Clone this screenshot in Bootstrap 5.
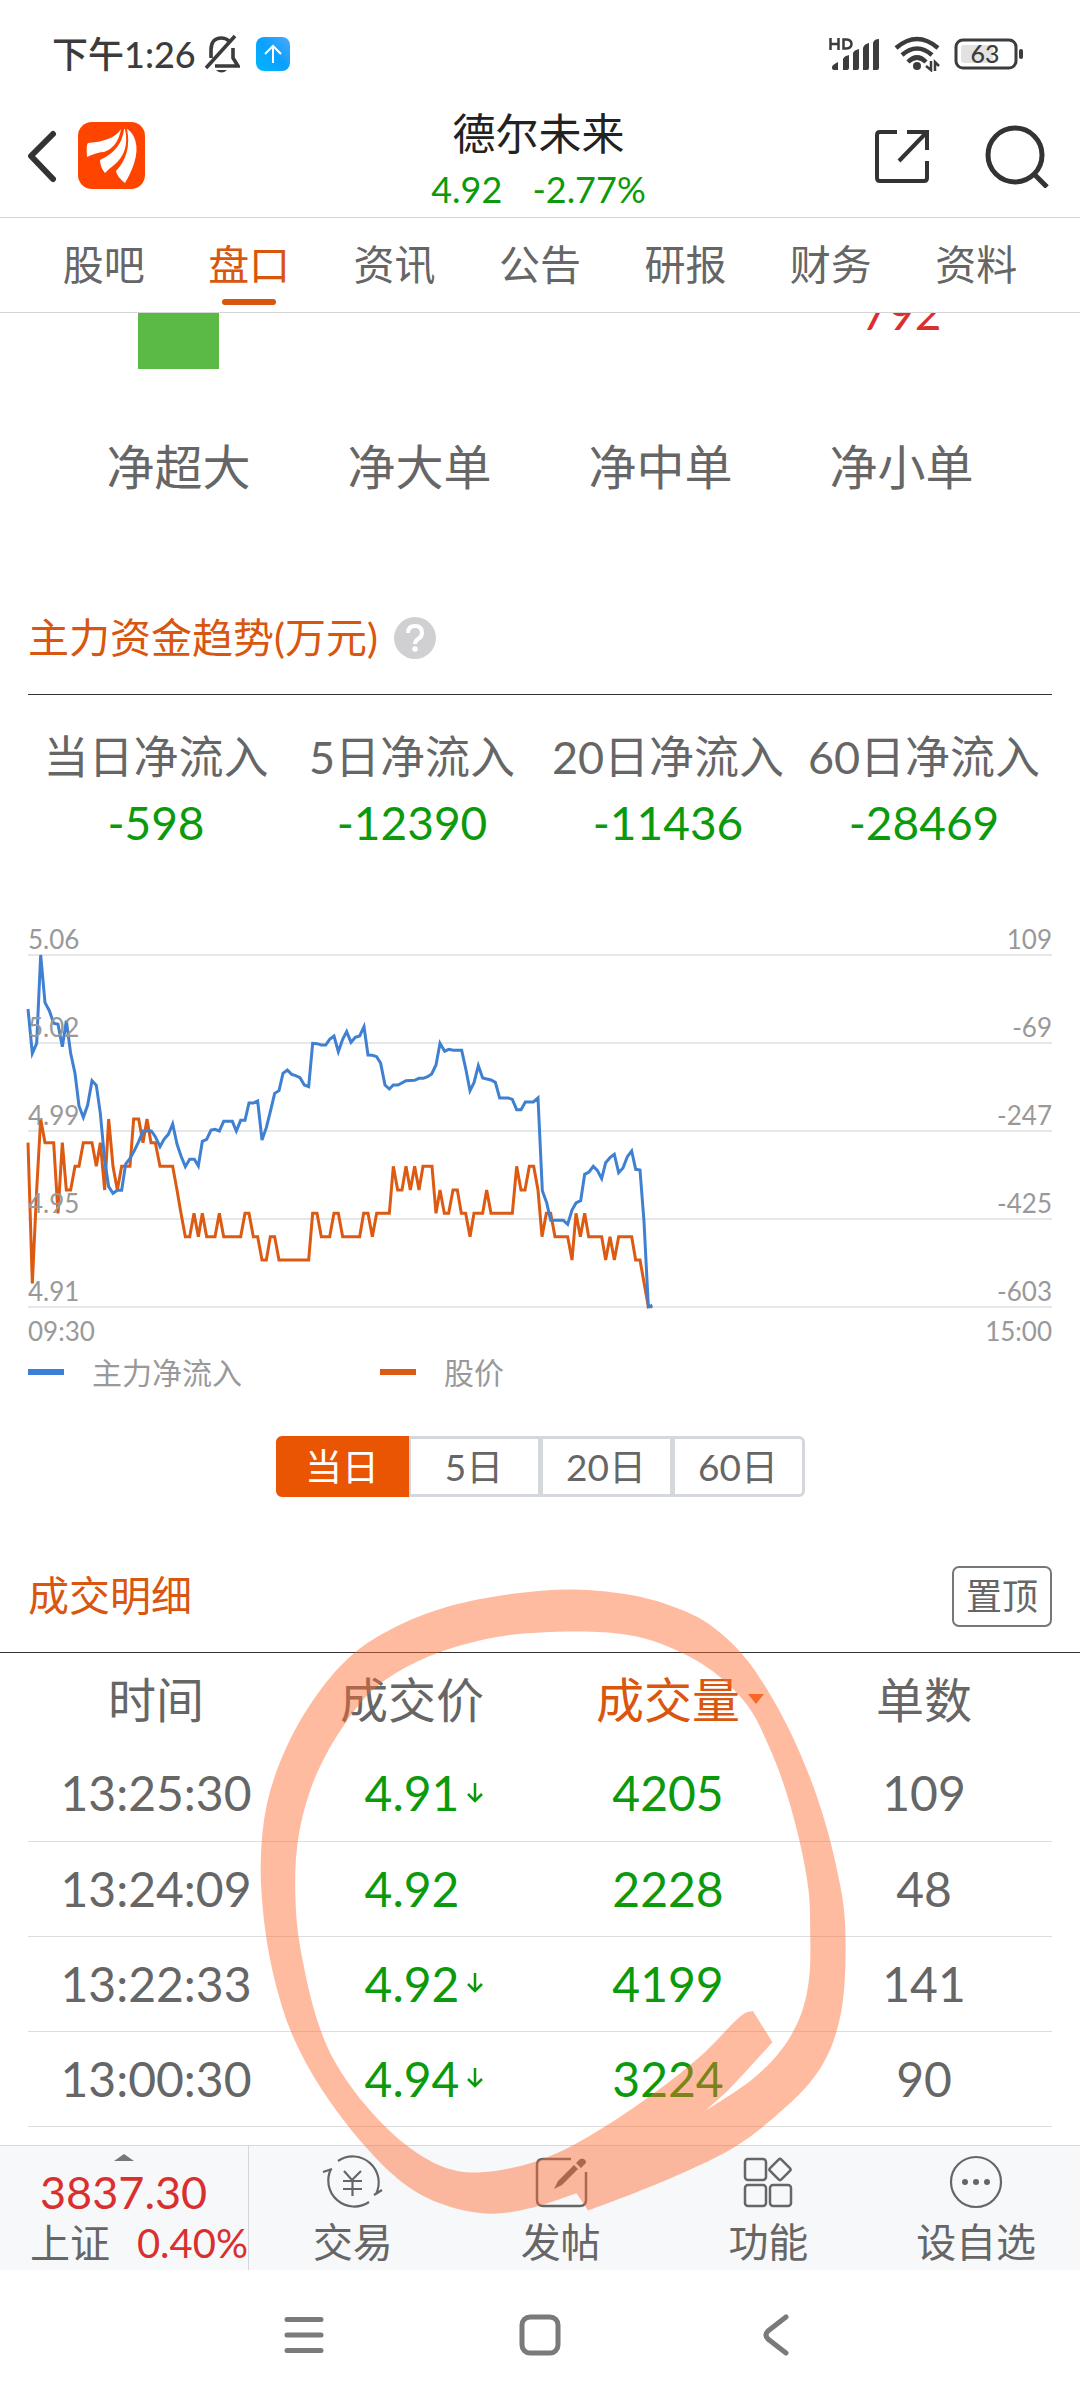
<!DOCTYPE html>
<html lang="zh-CN">
<head>
<meta charset="utf-8">
<meta name="viewport" content="width=device-width, initial-scale=1">
<title>德尔未来 盘口</title>
<link href="https://cdn.jsdelivr.net/npm/bootstrap@5.3.0/dist/css/bootstrap.min.css" rel="stylesheet">
<style>
:root{--ink:#666;--up:#d9302f;--down:#0b9a0b;--accent:#d9560f;--grid:#e6e7e9}
body{font-family:Lato,"Noto Sans CJK SC",sans-serif;color:var(--ink);background:#fff;font-size:40px;line-height:60px}
svg{display:block;flex:none}
a{color:inherit;text-decoration:none}
.app-shell{overflow:hidden}
.t-up{color:var(--up)}
.t-down{color:var(--down)}
.t-accent{color:var(--accent)}
.edge{padding-left:28px;padding-right:28px}
.status{height:100px;padding:8px 56px 0 52px;color:#3c3c3c;font-size:36px;font-weight:500}
.status .left-set{gap:8px}
.status .left-set svg+svg{margin-left:8px}
.status .right-set{gap:14px}
.app-head{height:118px;padding:0 31px 0 28px;border-bottom:1px solid #d5d5d5;display:grid;grid-template-columns:1fr auto 1fr;align-items:center}
.app-head .tools{padding-bottom:6px}
.app-head h1{font-size:43px;line-height:60px;font-weight:400;color:#222;margin:0}
.app-head .quote{font-size:36px;line-height:50px;gap:30px}
.plain{border:0;background:none;padding:0;color:inherit}
.tabs{height:95px;padding:0 31px;border-bottom:1px solid #d5d5d5}
.tabs a{position:relative;font-size:41px;line-height:94px}
.tabs a.active::after{content:"";position:absolute;left:50%;bottom:7px;width:54px;height:6px;margin-left:-27px;border-radius:3px;background:var(--accent)}
.flow-bars{padding:0 58px;height:56px;color:var(--up)}
.flow-bars .bar{width:81px;height:56px;background:#5bb946}
.flow-bars .num{height:17px;overflow:hidden;font-size:46px;line-height:34px}
.flow-names{padding:0 58px;margin-top:68px;font-size:48px}
.sect{height:113px}
.sect h2{font-size:41px;line-height:60px;font-weight:400;margin:0}
.fund{margin-top:85px;border-bottom:1px solid #333}
.stats{padding-top:29px;font-size:45px;line-height:66px}
.stats dt{font-weight:400;white-space:nowrap}
.stats dd{margin:0;font-size:46px;line-height:66px}
.chart{margin-top:60px;font-size:26px;line-height:30px;color:#999;position:relative}
.chart .lvl{height:88px;border-bottom:2px solid var(--grid)}
.chart .lvl:first-of-type{height:40px}
.chart .lvl span{position:relative;z-index:1}
.chart svg{position:absolute;left:0;top:39px;width:100%;height:352px;overflow:visible}
.times{font-size:26px;line-height:46px;color:#999}
.legend-row{height:36px;font-size:30px;color:#999;line-height:36px}
.legend-row .item{width:352px;gap:28px}
.swatch{width:36px;height:6px}
.range{margin-top:46px}
.range .btn{width:133px;height:61px;padding:0;border:3px solid #d4d8dc;border-radius:6px;font-size:37px;line-height:55px;color:var(--ink)}
.range .btn-check:checked+.btn{background:#ea5504;border-color:#ea5504;color:#fff}
.deals{margin-top:43px;border-bottom:1px solid #333}
.pin{width:100px;height:61px;border:2px solid #777;border-radius:7px;font-size:36px;line-height:57px}
.deal-table{table-layout:fixed;width:100%;text-align:center;font-size:48px;line-height:60px}
.deal-table th{height:93px;font-weight:400;padding:0}
.deal-table td{height:95px;padding:0;border-bottom:1px solid #ddd}
.tip{position:relative}
.tip svg{position:absolute;left:100%;top:50%;margin-left:8px;transform:translateY(-50%)}
.dock{margin-top:18px;height:125px;background:#f7f8fa;border-top:1px solid #d4d8dc}
.dock .index{flex:0 0 249px;border-right:1px solid #d4d8dc;padding:8px 0 0 30px}
.dock .index svg{margin:0 0 0 84px}
.dock .big{font-size:45px;line-height:62px;padding-left:10px}
.dock .small-line{line-height:40px;white-space:nowrap}
.dock .entry{flex:1 1 0;padding-top:8px;line-height:40px;gap:12px}
.sysnav{height:130px}
.sysnav .keys{width:514px}
.marker{position:absolute;left:200px;top:1560px;pointer-events:none}
</style>
<script src="https://cdn.jsdelivr.net/npm/bootstrap@5.3.0/dist/js/bootstrap.bundle.min.js"></script>
</head>
<body>
<div class="app-shell position-relative">

<div class="status d-flex align-items-center justify-content-between">
  <div class="left-set d-flex align-items-center">
    <span>下午1:26</span>
    <svg width="36" height="40" viewBox="0 0 36 40" fill="none" stroke="#3c3c3c" stroke-width="3.600"><path d="M7 24V16C7 8 11 4 17 4c3 0 6 1 8 3M29 14v10l5 8H11M2 34L31 2"/><path d="M12 36h11q-5.500 5-11 0z" fill="#3c3c3c" stroke="none"/></svg>
    <svg width="34" height="34" viewBox="0 0 34 34"><defs><linearGradient id="sky" x1="0" y1="1" x2="1" y2="0"><stop offset="0" stop-color="#00b8ff"/><stop offset=".5" stop-color="#0aa0ff"/><stop offset="1" stop-color="#4aa8ff"/></linearGradient></defs><rect width="34" height="34" rx="8" fill="url(#sky)"/><path d="M17 26V9M9 17l8-8 8 8" fill="none" stroke="#fff" stroke-width="2"/></svg>
  </div>
  <div class="right-set d-flex align-items-center">
    <svg width="51" height="34" viewBox="0 0 51 34" fill="#3c3c3c"><path d="M1.500 1v12M9.500 1v12M1.500 7h8M14.500 2.500v9h3q5-.5 5-4.500t-5-4.500z" fill="none" stroke="#3c3c3c" stroke-width="2.500"/><path d="M3 30q0-2 6-5v8H5q-2 0-2-2zM14 22q1-3 6-4v13q0 2-2 2h-4zM24 16q1-3 6-4v19q0 2-2 2h-4zM34 11q1-4 6-5v25q0 2-2 2h-4zM44 6q1-4 6-4v29q0 2-2 2h-4z"/></svg>
    <svg width="46" height="36" viewBox="0 0 46 36" fill="none" stroke="#3c3c3c" stroke-width="4.500"><path d="M2 12q21-18 42 0M8 19q15-13 30 0M14 26q9-9 18 0"/><circle cx="23" cy="30" r="4" fill="#3c3c3c" stroke="none"/><path d="M37 25v9l-5-4M41 35v-9l4 4" stroke-width="2.500"/></svg>
    <svg width="70" height="32" viewBox="0 0 70 32"><rect x="2" y="2" width="60" height="28" rx="7" fill="none" stroke="#3c3c3c" stroke-width="3"/><path d="M7 10q0-3 3-3h29v18H10q-3 0-3-3z" fill="#e2e2e2"/><rect x="65" y="11" width="4" height="10" rx="2" fill="#3c3c3c"/><text x="31" y="25" font-size="25" text-anchor="middle" fill="#3c3c3c" font-family="Lato">63</text></svg>
  </div>
</div>

<header class="app-head">
  <div class="tools d-flex align-items-center">
    <button class="plain" aria-label="返回"><svg width="50" height="54" viewBox="0 0 50 54" fill="none" stroke="#333" stroke-width="6" stroke-linecap="round" stroke-linejoin="round"><path d="M25 5L3 27l22 23"/></svg></button>
    <svg width="67" height="67" viewBox="0 0 67 67"><rect width="67" height="67" rx="14" fill="#ff4400"/><g fill="#fff"><path d="M43 7Q36 19 10 21Q8 22 9 35Q20 30 26 30Q40 25 43 7z"/><path d="M46 7Q44 28 22 38Q22 45 27 51Q32 46 36 43Q52 30 47 7z"/><path d="M49 7Q54 32 38 49Q39 55 47 61Q64 32 56 15Q53 9 49 7z"/></g></svg>
  </div>
  <div class="text-center">
    <h1>德尔未来</h1>
    <div class="quote d-flex justify-content-center t-down"><span>4.92</span><span>-2.77%</span></div>
  </div>
  <div class="tools d-flex align-items-center justify-content-end" style="gap:56px">
    <button class="plain" aria-label="分享"><svg width="54" height="54" viewBox="0 0 54 54" fill="none" stroke="#333" stroke-width="4"><path d="M22 3H5q-3 0-3 3v43q0 3 3 3h44q3 0 3-3V32M32 3h20v18M51 4L24 32"/></svg></button>
    <button class="plain" aria-label="搜索"><svg width="64" height="64" viewBox="0 0 64 64" fill="none" stroke="#333" stroke-width="5"><circle cx="30" cy="31" r="27"/><path d="M49 50l13 13"/></svg></button>
  </div>
</header>

<nav class="tabs d-flex">
  <a href="#" class="flex-fill text-center">股吧</a>
  <a href="#" class="flex-fill text-center active t-accent">盘口</a>
  <a href="#" class="flex-fill text-center">资讯</a>
  <a href="#" class="flex-fill text-center">公告</a>
  <a href="#" class="flex-fill text-center">研报</a>
  <a href="#" class="flex-fill text-center">财务</a>
  <a href="#" class="flex-fill text-center">资料</a>
</nav>

<section>
  <div class="flow-bars d-flex">
    <div class="w-25 d-flex justify-content-center"><div class="bar"></div></div>
    <div class="w-25"></div>
    <div class="w-25"></div>
    <div class="w-25"><div class="num d-flex justify-content-center align-items-end">792</div></div>
  </div>
  <div class="flow-names d-flex text-center">
    <div class="w-25">净超大</div><div class="w-25">净大单</div><div class="w-25">净中单</div><div class="w-25">净小单</div>
  </div>
</section>

<section class="edge">
  <div class="sect fund d-flex align-items-center">
    <h2 class="t-accent">主力资金趋势(万元)</h2>
    <button class="plain ms-3" aria-label="说明"><svg width="42" height="42" viewBox="0 0 42 42"><circle cx="21" cy="21" r="21" fill="#d0d0d2"/><path d="M14 16q0-7 7-7t7 7q0 4-4 6-3 2-3 5" fill="none" stroke="#fff" stroke-width="4"/><circle cx="21" cy="32" r="2.800" fill="#fff"/></svg></button>
  </div>
  <div class="stats d-flex text-center">
    <dl class="w-25 mb-0"><dt>当日净流入</dt><dd class="t-down">-598</dd></dl>
    <dl class="w-25 mb-0"><dt>5日净流入</dt><dd class="t-down">-12390</dd></dl>
    <dl class="w-25 mb-0"><dt>20日净流入</dt><dd class="t-down">-11436</dd></dl>
    <dl class="w-25 mb-0"><dt>60日净流入</dt><dd class="t-down">-28469</dd></dl>
  </div>

  <div class="chart">
    <div class="lvl d-flex justify-content-between align-items-end"><span>5.06</span><span>109</span></div>
    <div class="lvl d-flex justify-content-between align-items-end"><span>5.02</span><span>-69</span></div>
    <div class="lvl d-flex justify-content-between align-items-end"><span>4.99</span><span>-247</span></div>
    <div class="lvl d-flex justify-content-between align-items-end"><span>4.95</span><span>-425</span></div>
    <div class="lvl d-flex justify-content-between align-items-end"><span>4.91</span><span>-603</span></div>
    <svg viewBox="84 165 3072 1056" preserveAspectRatio="none" fill="none" stroke-width="9">
      <polyline stroke="#dc5a12" points="84,728 97,1150 110,870 122,657 135,728 161,728 174,940 187,728 199,870 212,870 225,799 237,799 250,728 276,728 289,799 301,728 314,870 326,657 339,799 352,870 365,799 390,799 401,657 416,657 429,728 441,657 453,728 466,728 480,799 518,799 531,870 543,940 556,1010 569,1010 582,940 595,1010 607,940 620,1010 645,1010 658,940 671,1010 722,1010 735,940 747,940 760,1010 773,1010 786,1080 799,1080 811,1010 824,1010 837,1080 926,1080 938,940 951,940 964,1010 989,1010 1002,940 1015,940 1028,1010 1079,1010 1091,940 1104,940 1117,1010 1130,940 1168,940 1180,799 1193,870 1206,870 1218,799 1231,870 1244,799 1257,870 1269,799 1296,799 1308,940 1320,870 1333,940 1346,940 1359,870 1372,870 1384,940 1397,940 1410,1010 1422,940 1448,940 1460,870 1473,940 1537,940 1550,799 1563,870 1575,870 1588,799 1601,799 1614,870 1626,1010 1639,940 1652,940 1665,1010 1703,1010 1716,1080 1728,940 1741,1010 1754,940 1766,1010 1805,1010 1817,1080 1830,1010 1843,1080 1856,1010 1895,1010 1907,1080 1920,1080 1945,1220 1957,1220"/>
      <polyline stroke="#3f80d2" points="84,327 97,460 110,430 122,165 135,308 148,332 161,370 174,373 187,440 199,362 212,460 225,520 237,618 250,652 263,615 276,542 289,556 301,640 314,780 326,860 339,880 352,871 365,871 377,792 390,775 403,752 416,725 429,693 454,693 466,710 480,740 492,718 505,703 518,672 531,732 543,768 556,800 569,778 583,778 595,798 607,724 620,718 633,690 645,688 658,693 671,664 697,664 709,693 722,661 735,661 747,609 760,609 773,603 786,720 799,683 811,635 824,580 837,572 849,520 862,510 875,523 887,527 900,533 913,555 926,560 938,430 951,431 964,435 977,435 989,418 1002,408 1015,455 1028,418 1040,395 1053,427 1066,412 1079,408 1092,380 1104,465 1117,466 1130,470 1142,490 1155,555 1168,567 1180,555 1194,555 1218,542 1244,541 1257,535 1270,535 1283,530 1295,522 1308,495 1320,430 1334,454 1346,448 1360,451 1385,451 1398,510 1410,572 1422,548 1435,497 1448,534 1473,540 1486,547 1499,594 1525,594 1537,598 1550,629 1563,629 1576,606 1600,606 1614,594 1627,872 1640,908 1652,961 1690,961 1703,973 1716,930 1728,909 1742,902 1754,823 1767,816 1780,799 1792,811 1805,836 1817,788 1830,773 1843,763 1856,818 1869,804 1882,770 1895,753 1907,808 1920,810 1932,965 1945,1220 1957,1216"/>
    </svg>
  </div>
  <div class="times d-flex justify-content-between"><span>09:30</span><span>15:00</span></div>
  <div class="legend-row d-flex">
    <div class="item d-flex align-items-center"><span class="swatch" style="background:#3b7fd9"></span>主力净流入</div>
    <div class="item d-flex align-items-center"><span class="swatch" style="background:#dc5a12"></span>股价</div>
  </div>
  <div class="range d-flex justify-content-center">
    <div class="btn-group" role="group" aria-label="时间范围">
      <input type="radio" class="btn-check" name="range" id="r1" checked><label class="btn" for="r1">当日</label>
      <input type="radio" class="btn-check" name="range" id="r5"><label class="btn" for="r5">5日</label>
      <input type="radio" class="btn-check" name="range" id="r20"><label class="btn" for="r20">20日</label>
      <input type="radio" class="btn-check" name="range" id="r60"><label class="btn" for="r60">60日</label>
    </div>
  </div>
</section>

<section>
  <div class="sect deals edge d-flex align-items-center justify-content-between">
    <h2 class="t-accent">成交明细</h2>
    <button class="plain pin">置顶</button>
  </div>
  <div class="edge">
    <table class="deal-table">
      <thead><tr><th>时间</th><th>成交价</th><th class="t-accent"><span class="tip">成交量<svg width="16" height="10" viewBox="0 0 16 10"><path d="M0 0h16L8 10z" fill="#f0641e"/></svg></span></th><th>单数</th></tr></thead>
      <tbody>
        <tr><td>13:25:30</td><td class="t-down"><span class="tip">4.91<svg width="16" height="20" viewBox="0 0 16 20" fill="none" stroke="#0b9a0b" stroke-width="2.500"><path d="M8 0v18M1 11l7 7 7-7"/></svg></span></td><td class="t-down">4205</td><td>109</td></tr>
        <tr><td>13:24:09</td><td class="t-down">4.92</td><td class="t-down">2228</td><td>48</td></tr>
        <tr><td>13:22:33</td><td class="t-down"><span class="tip">4.92<svg width="16" height="20" viewBox="0 0 16 20" fill="none" stroke="#0b9a0b" stroke-width="2.500"><path d="M8 0v18M1 11l7 7 7-7"/></svg></span></td><td class="t-down">4199</td><td>141</td></tr>
        <tr><td>13:00:30</td><td class="t-down"><span class="tip">4.94<svg width="16" height="20" viewBox="0 0 16 20" fill="none" stroke="#0b9a0b" stroke-width="2.500"><path d="M8 0v18M1 11l7 7 7-7"/></svg></span></td><td class="t-down">3224</td><td>90</td></tr>
      </tbody>
    </table>
  </div>
</section>

<footer>
  <div class="dock d-flex">
    <div class="index">
      <svg width="20" height="7" viewBox="0 0 20 7"><path d="M0 7L10 0l10 7z" fill="#777"/></svg>
      <div class="big t-up">3837.30</div>
      <div class="small-line d-flex justify-content-between"><span>上证</span><span class="t-up">0.40%</span></div>
    </div>
    <a href="#" class="entry d-flex flex-column align-items-center">
      <svg width="64" height="56" viewBox="0 0 64 56" fill="none" stroke="#666" stroke-width="2.200"><path d="M17 7A26 26 0 0 1 55 40M53 41l8-5M2 18l9-3M10 15A26 26 0 0 0 48 48"/><path d="M23 17l8 9 9-9M31.500 26v16M22 27h19M22 35h19"/></svg>
      <span>交易</span></a>
    <a href="#" class="entry d-flex flex-column align-items-center">
      <svg width="64" height="56" viewBox="0 0 64 56" fill="none" stroke="#666" stroke-width="2.500"><path d="M42 5H14q-6 0-6 6v35q0 6 6 6h37q6 0 6-6V18"/><path d="M25 35l4-8 16-16 4 4-16 16zM47 9l4-4q4-1 5 1 2 2 0 4l-4 4z" fill="#666" stroke="none"/></svg>
      <span>发帖</span></a>
    <a href="#" class="entry d-flex flex-column align-items-center">
      <svg width="64" height="56" viewBox="0 0 64 56" fill="none" stroke="#666" stroke-width="2.500"><rect x="9" y="5" width="21" height="21" rx="3"/><rect x="9" y="31" width="21" height="21" rx="3"/><rect x="34" y="31" width="21" height="21" rx="3"/><rect x="36" y="7.500" width="16" height="16" rx="2" transform="rotate(45 44 15.500)"/></svg>
      <span>功能</span></a>
    <a href="#" class="entry d-flex flex-column align-items-center">
      <svg width="64" height="56" viewBox="0 0 64 56" fill="#666"><circle cx="32" cy="28" r="25" fill="none" stroke="#666" stroke-width="2.200"/><circle cx="21" cy="28" r="3"/><circle cx="32" cy="28" r="3"/><circle cx="43" cy="28" r="3"/></svg>
      <span>设自选</span></a>
  </div>
  <div class="sysnav d-flex justify-content-center align-items-center">
    <div class="keys d-flex justify-content-between align-items-center">
      <button class="plain" aria-label="任务"><svg width="42" height="42" viewBox="0 0 42 42" stroke="#7a7a7a" stroke-width="5" stroke-linecap="round"><path d="M4 5.500h34M4 21h34M4 36.500h34"/></svg></button>
      <button class="plain" aria-label="主页"><svg width="42" height="42" viewBox="0 0 42 42" fill="none" stroke="#7a7a7a" stroke-width="5"><rect x="3" y="3" width="36" height="36" rx="8"/></svg></button>
      <button class="plain" aria-label="后退"><svg width="42" height="42" viewBox="-8 0 42 42" fill="none" stroke="#7a7a7a" stroke-width="5" stroke-linecap="round"><path d="M23 3L5 17q-4 4 0 8l18 14"/></svg></button>
    </div>
  </div>
</footer>

<svg class="marker" width="680" height="680" viewBox="0 0 1568 1568"><path id="ring" fill="#ff6a30" fill-opacity=".46" fill-rule="evenodd"/></svg>
</div>
<script>
// Hand-drawn ring: each list is one smooth stroke edge, corners fall between lists.
const loops=[
 [[[895,1500],[1060,1436],[1230,1355],[1350,1262],[1425,1180],[1467,1090],[1486,980],[1487,830],[1470,720],[1440,600],[1398,480],[1340,355],[1265,235],[1190,160],[1110,115],[1000,82],[860,68],[720,78],[580,105],[460,150],[355,215],[270,310],[200,430],[155,560],[140,700],[150,850],[175,980],[215,1100],[280,1220],[370,1340],[460,1430],[550,1482],[660,1507],[760,1495],[868,1460]]],
 [[[1275,1040],[1243,1055],[1150,1148],[1030,1242],[900,1327],[780,1385],[650,1412],[560,1399],[470,1345],[380,1255],[310,1155],[270,1060],[240,940],[222,820],[222,680],[245,560],[290,450],[370,330],[450,262],[560,210],[700,175],[860,165],[980,172],[1080,200],[1180,255],[1262,335],[1312,430],[1350,530],[1383,650],[1403,760],[1407,850],[1405,960],[1385,1050],[1340,1130],[1270,1200],[1165,1270]],[[1165,1270],[1225,1215],[1320,1112]]]
];
const smooth=p=>{let d='L'+p[0];for(let i=0;i<p.length-1;i++){const a=p[i-1]||p[i],b=p[i],c=p[i+1],e=p[i+2]||c;
 d+='C'+[b[0]+(c[0]-a[0])/6,b[1]+(c[1]-a[1])/6,c[0]-(e[0]-b[0])/6,c[1]-(e[1]-b[1])/6,c[0],c[1]]}return d};
document.getElementById('ring').setAttribute('d',loops.map(l=>'M'+l[0][0]+l.map(smooth).join('')+'Z').join(''));
</script>
</body>
</html>
